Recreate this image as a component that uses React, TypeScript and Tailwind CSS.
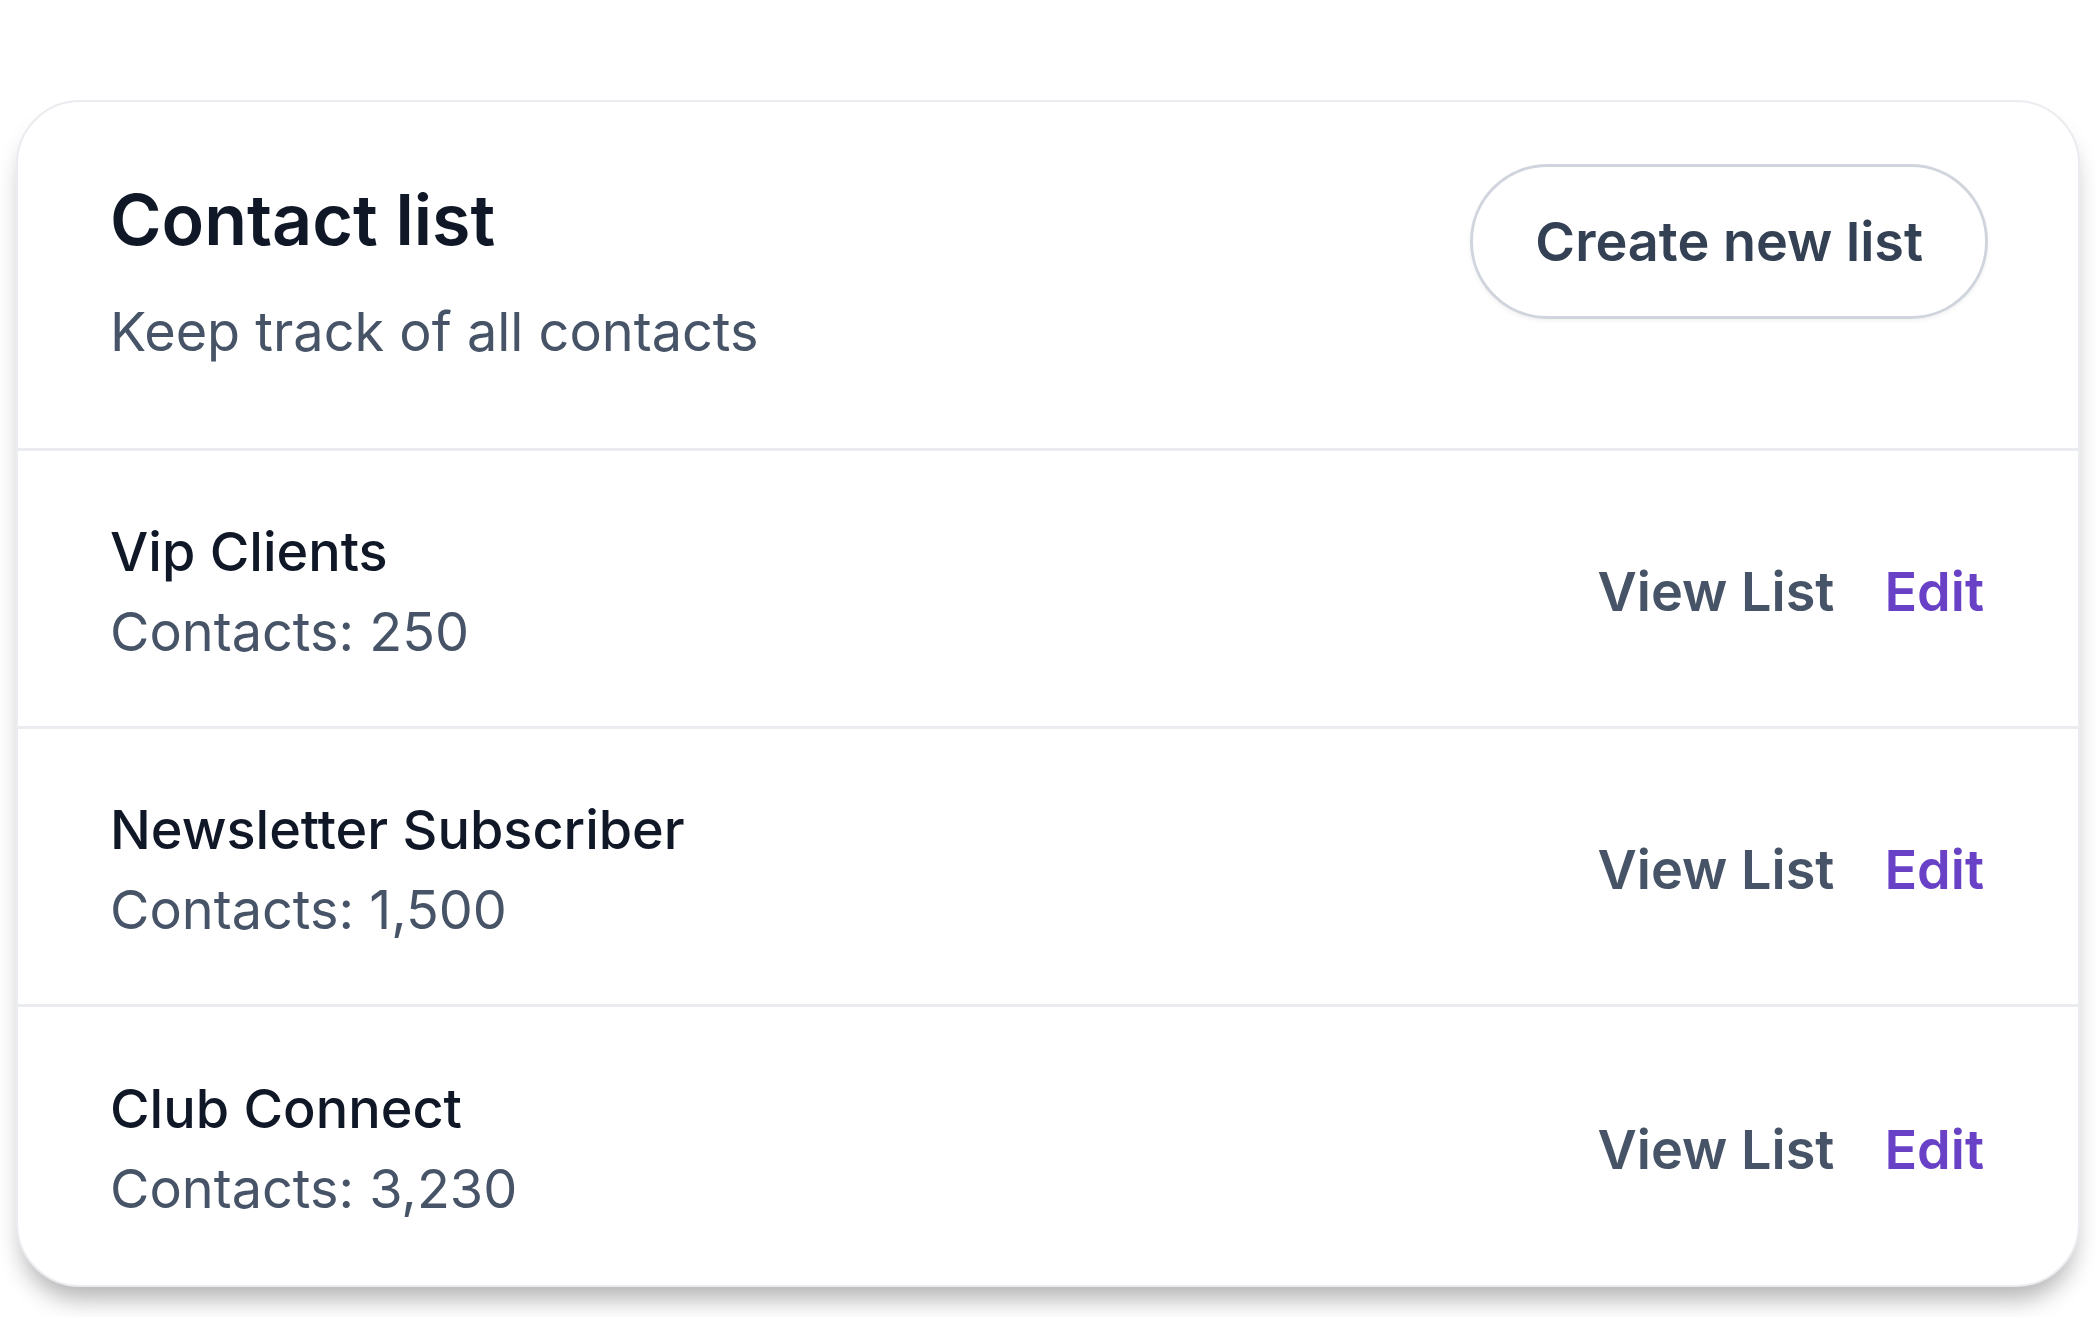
const lists = [
  { name: "Vip Clients", count: "250" },
  { name: "Newsletter Subscriber", count: "1,500" },
  { name: "Club Connect", count: "3,230" },
]

export default function App() {
  return (
    <div className="min-h-screen bg-white px-4 pt-[100px]" style={{ fontFamily: "Inter, 'Noto Sans', sans-serif" }}>
      <div className="rounded-[64px] border-2 border-[#eaecf0] bg-white shadow-[0_18px_24px_-6px_rgba(0,0,0,0.3)] overflow-hidden">
        {/* Header */}
        <div className="flex justify-between items-start pl-[92px] pr-[90px] h-[346px]">
          <div className="pt-[76px]">
            <h1 className="text-[70px] leading-[84px] font-semibold text-[#101828]">Contact list</h1>
            <p className="mt-[38px] text-[54px] leading-[64px] text-[#475467]">Keep track of all contacts</p>
          </div>
          <button className="mt-[62px] h-[155px] px-[62px] rounded-full border-[3px] border-[#d0d5dd] bg-white shadow-[0_2px_4px_rgba(16,24,40,0.06)] text-[54px] font-semibold text-[#344054]">
            Create new list
          </button>
        </div>

        {/* Rows */}
        <div>
          {lists.map((item, i) => (
            <div
              key={item.name}
              className={`flex justify-between items-center pt-[6px] border-t-[3px] border-[#eaecf0] pl-[92px] pr-[94px] ${i === lists.length - 1 ? "h-[281px]" : "h-[278px]"}`}
            >
              <div className="flex flex-col">
                <span className="text-[54px] leading-[64px] font-medium text-[#101828]">{item.name}</span>
                <span className="mt-[16px] text-[54px] leading-[64px] text-[#475467]">Contacts: {item.count}</span>
              </div>
              <div className="flex items-center gap-[50px] text-[54px] font-semibold">
                <span className="text-[#475467]">View List</span>
                <span className="text-[#6941c6]">Edit</span>
              </div>
            </div>
          ))}
        </div>
      </div>
    </div>
  )
}
